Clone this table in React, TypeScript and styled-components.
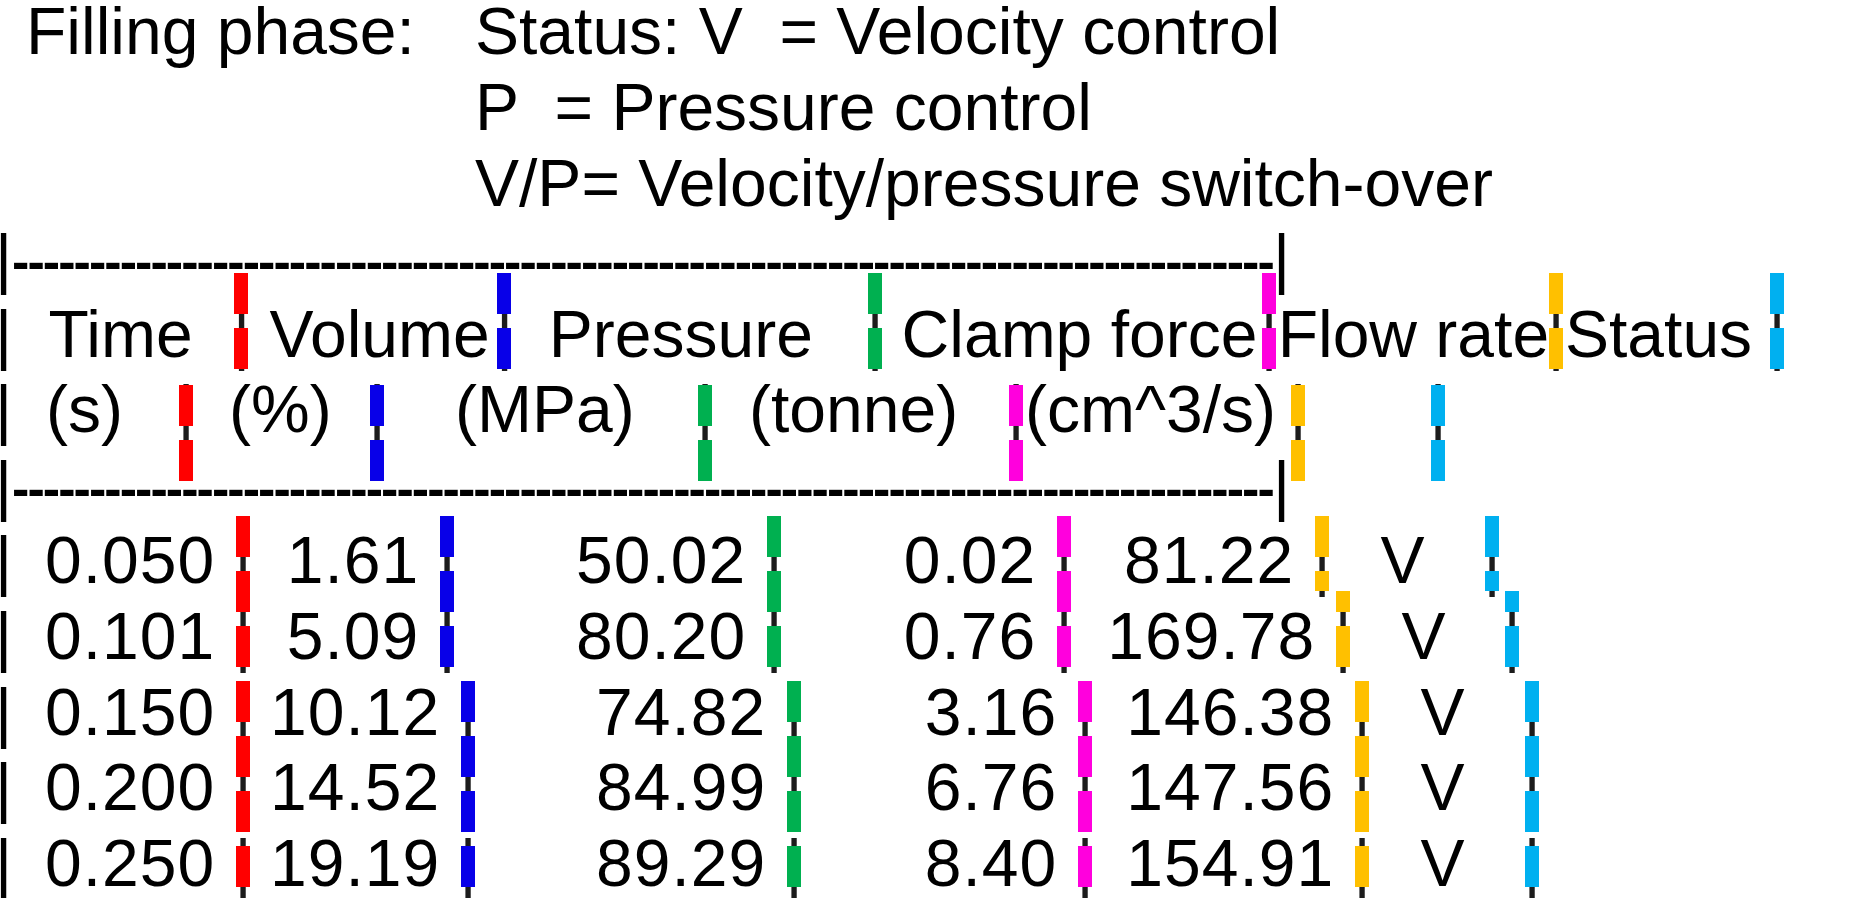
import React from 'react';
import styled, { createGlobalStyle } from 'styled-components';

const GlobalStyle = createGlobalStyle`
  html, body {
    margin: 0;
    height: 100%;
    overflow: hidden;
    background: #ffffff;
  }
`;

// text grid of the log dump
const LINE = 75.6;
const TOP = -5.7;
const PIPE_W = 17;
const LEFT_END = 12; // right edge of the leading "|", page px
const DASH = 41;
const PERIOD = 55;

const RED = '#ff0000';
const BLUE = '#0800e8';
const GREEN = '#00b050';
const MAGENTA = '#ff00dd';
const ORANGE = '#ffc000';
const CYAN = '#00b0f0';

const Sheet = styled.div`
  margin: ${TOP}px 0 0 -5px;
  font-family: 'Liberation Sans', Arial, sans-serif;
  font-size: 66px;
  line-height: ${LINE}px;
  color: #000;
  white-space: pre;
`;

const Intro = styled.div`
  display: flex;
`;

const Label = styled.div`
  flex: none;
  box-sizing: border-box;
  width: 480px;
  padding-left: 31px;
`;

const Notes = styled.div`
  display: flex;
  flex-direction: column;
`;

const Note = styled.div`
  height: ${LINE}px;
`;

const Row = styled.div`
  display: flex;
  align-items: baseline;
  height: ${LINE}px;
`;

const Pipe = styled.span`
  flex: none;
  width: ${PIPE_W}px;
  text-align: center;
`;

const Dashes = styled.span`
  flex: none;
  align-self: flex-start;
  font-size: 52px;
  font-weight: 700;
  line-height: 80px;
  letter-spacing: -1.94px;
`;

const Cell = styled.span<{ $w: number; $pad: number; $right?: boolean; $num?: boolean }>`
  flex: none;
  box-sizing: border-box;
  width: ${p => p.$w}px;
  padding-left: ${p => p.$pad}px;
  text-align: ${p => (p.$right ? 'right' : 'left')};
  letter-spacing: ${p => (p.$num ? '1px' : 'normal')};
`;

const Marker = styled.span<{ $color: string; $top: number; $len: number; $shift: number }>`
  flex: none;
  position: relative;
  width: ${PIPE_W}px;
  text-align: center;
  color: #1c1c1c;

  &::before {
    content: '';
    position: absolute;
    left: 1px;
    width: 14px;
    top: ${p => p.$top}px;
    height: ${p => p.$len}px;
    background-image: linear-gradient(
      to bottom,
      ${p => p.$color} 0,
      ${p => p.$color} ${DASH}px,
      transparent ${DASH}px
    );
    background-size: 14px ${PERIOD}px;
    background-repeat: repeat-y;
    background-position: 0 ${p => p.$shift}px;
  }
`;

type Kind = 'head1' | 'head2' | 'data';

const KINDS: Record<Kind, { top: number; len: number }> = {
  head1: { top: -24, len: 96 },
  head2: { top: 13, len: 97 },
  data: { top: -8, len: 76 },
};

// data rows share one dash rhythm down the page
const DATA_PHASE = 516;

type Col = { text: string; at: number; color: string; start?: number; right?: boolean };

function layout(cols: Col[]) {
  let prev = LEFT_END;
  return cols.map(c => {
    const w = c.at - PIPE_W / 2 - prev;
    const pad = c.start != null ? c.start - prev : 0;
    prev = c.at + PIPE_W / 2;
    return { ...c, w, pad };
  });
}

function TableRow({ cols, kind, line }: { cols: Col[]; kind: Kind; line: number }) {
  const { top, len } = KINDS[kind];
  const markerTop = TOP + line * LINE + top;
  const shift =
    kind === 'data'
      ? Math.round((((DATA_PHASE - markerTop) % PERIOD) + PERIOD) % PERIOD)
      : 0;

  return (
    <Row>
      <Pipe>|</Pipe>
      {layout(cols).map((c, i) => (
        <React.Fragment key={i}>
          <Cell $w={c.w} $pad={c.pad} $right={c.right} $num={c.right}>
            {c.text}
          </Cell>
          <Marker $color={c.color} $top={top} $len={len} $shift={shift}>
            |
          </Marker>
        </React.Fragment>
      ))}
    </Row>
  );
}

function RuleRow() {
  return (
    <Row>
      <Pipe>|</Pipe>
      <Dashes>{'-'.repeat(82)}</Dashes>
      <Pipe>|</Pipe>
    </Row>
  );
}

const COLORS = [RED, BLUE, GREEN, MAGENTA, ORANGE, CYAN];

const headOne: Col[] = [
  { text: 'Time', start: 48.5, at: 241.5, color: RED },
  { text: 'Volume', start: 269.6, at: 504.5, color: BLUE },
  { text: 'Pressure', start: 548.8, at: 875, color: GREEN },
  { text: 'Clamp force', start: 901.6, at: 1269, color: MAGENTA },
  { text: 'Flow rate', start: 1277.7, at: 1556, color: ORANGE },
  { text: 'Status', start: 1565, at: 1777, color: CYAN },
];

const headTwo: Col[] = [
  { text: '(s)', start: 46, at: 186, color: RED },
  { text: '(%)', start: 229, at: 377, color: BLUE },
  { text: '(MPa)', start: 455, at: 705, color: GREEN },
  { text: '(tonne)', start: 749, at: 1016, color: MAGENTA },
  { text: '(cm^3/s)', start: 1025, at: 1298, color: ORANGE },
  { text: ' ', at: 1438, color: CYAN },
];

const samples: { values: string[]; at: number[] }[] = [
  { values: ['0.050', '1.61', '50.02', '0.02', '81.22', 'V'], at: [243, 447, 774, 1064, 1322, 1492] },
  { values: ['0.101', '5.09', '80.20', '0.76', '169.78', 'V'], at: [243, 447, 774, 1064, 1343, 1512] },
  { values: ['0.150', '10.12', '74.82', '3.16', '146.38', 'V'], at: [243, 468, 794, 1085, 1362, 1532] },
  { values: ['0.200', '14.52', '84.99', '6.76', '147.56', 'V'], at: [243, 468, 794, 1085, 1362, 1532] },
  { values: ['0.250', '19.19', '89.29', '8.40', '154.91', 'V'], at: [243, 468, 794, 1085, 1362, 1532] },
];

function sampleCols(values: string[], at: number[]): Col[] {
  return values.map((v, i) => {
    if (i === values.length - 1) {
      return { text: v, at: at[i], color: COLORS[i], start: at[i - 1] + PIPE_W / 2 + 50 };
    }
    return { text: `${v} `, at: at[i], color: COLORS[i], right: true };
  });
}

export default function App() {
  return (
    <>
      <GlobalStyle />
      <Sheet>
        <Intro>
          <Label>Filling phase:</Label>
          <Notes>
            <Note>Status: V  = Velocity control</Note>
            <Note>P  = Pressure control</Note>
            <Note>V/P= Velocity/pressure switch-over</Note>
          </Notes>
        </Intro>
        <RuleRow />
        <TableRow cols={headOne} kind="head1" line={4} />
        <TableRow cols={headTwo} kind="head2" line={5} />
        <RuleRow />
        {samples.map((s, i) => (
          <TableRow key={s.values[0]} cols={sampleCols(s.values, s.at)} kind="data" line={7 + i} />
        ))}
      </Sheet>
    </>
  );
}
